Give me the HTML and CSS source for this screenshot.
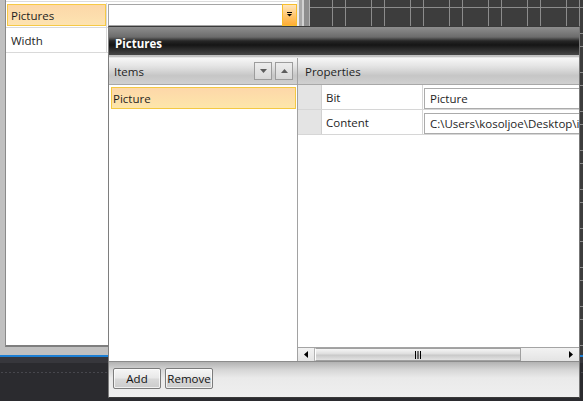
FILE: index.html
```html
<!DOCTYPE html>
<html>
<head>
<meta charset="utf-8">
<title>Designer</title>
<link rel="stylesheet" href="styles.css">
</head>
<body>
<div class="ide">
  <div class="workspace">
    <div class="prop-pane">
      <div class="prop-grid">
        <div class="pg-row">
          <div class="pg-name"><span class="pg-label is-selected">Pictures</span></div>
          <div class="pg-value">
            <div class="combo">
              <div class="combo-field"></div>
              <span class="combo-btn">
                <svg width="5" height="5" viewBox="0 0 5 5"><rect x="0" y="0" width="5" height="1" fill="#000"/><path d="M0 2H5L2.5 4.5Z" fill="#000"/></svg>
              </span>
            </div>
          </div>
        </div>
        <div class="pg-row">
          <div class="pg-name"><span class="pg-label">Width</span></div>
          <div class="pg-value"></div>
        </div>
      </div>
    </div>
    <div class="splitter"></div>
    <div class="designer"></div>
  </div>
  <div class="accent-line"></div>
  <div class="statusbar"><div class="status-dots"></div></div>

  <div class="dialog">
    <div class="dialog-title">Pictures</div>
    <div class="dialog-body">
      <div class="items-panel">
        <div class="panel-header">
          <span>Items</span>
          <div class="header-buttons">
            <button class="mini-btn"><svg width="7" height="4" viewBox="0 0 7 4"><path d="M0 0H7L3.5 4Z" fill="#5c5c5c"/></svg></button>
            <button class="mini-btn"><svg width="7" height="4" viewBox="0 0 7 4"><path d="M0 4H7L3.5 0Z" fill="#5c5c5c"/></svg></button>
          </div>
        </div>
        <div class="items-list">
          <div class="item is-selected">Picture</div>
        </div>
      </div>
      <div class="props-panel">
        <div class="panel-header props-header"><span>Properties</span></div>
        <div class="props-rows">
          <div class="prow">
            <div class="prow-gutter"></div>
            <div class="prow-name">Bit</div>
            <div class="prow-value"><div class="value-box">Picture</div></div>
          </div>
          <div class="prow">
            <div class="prow-gutter"></div>
            <div class="prow-name">Content</div>
            <div class="prow-value"><div class="value-box">C:\Users\kosoljoe\Desktop\images\picture.png</div></div>
          </div>
        </div>
        <div class="hscroll">
          <div class="hs-btn"><svg width="4" height="7" viewBox="0 0 4 7"><path d="M4 0V7L0 3.5Z" fill="#000"/></svg></div>
          <div class="hs-thumb"><svg width="6" height="8" viewBox="0 0 6 8"><rect x="0" y="0" width="1" height="8" fill="#000"/><rect x="2.5" y="0" width="1" height="8" fill="#000"/><rect x="5" y="0" width="1" height="8" fill="#000"/></svg></div>
          <div class="hs-track"></div>
          <div class="hs-btn hs-btn-end"><svg width="4" height="7" viewBox="0 0 4 7"><path d="M0 0V7L4 3.5Z" fill="#000"/></svg></div>
        </div>
      </div>
    </div>
    <div class="dialog-footer">
      <button class="btn">Add</button>
      <button class="btn">Remove</button>
    </div>
  </div>
</div>
</body>
</html>
```
FILE: styles.css
```css
* { box-sizing: border-box; }

html, body { margin: 0; padding: 0; }

body {
  width: 583px;
  height: 401px;
  overflow: hidden;
  background: #2b2b2f;
  font-family: "Open Sans", "Liberation Sans", sans-serif;
  font-size: 11.5px;
  color: #1e1e1e;
}

.ide {
  position: relative;
  width: 583px;
  height: 401px;
}

/* ---------- workspace: property grid, splitter, design surface ---------- */

.workspace {
  display: flex;
  height: 355px;
}

.prop-pane {
  width: 297px;
  padding: 0 0 8px 5px;
  background: #c0c0c0;
  display: flex;
}

.prop-grid {
  flex: 1;
  border-left: 1px solid #8a8a8a;
  border-bottom: 2px solid #7e7e7e;
  padding-top: 3px;
  background: linear-gradient(#fff 1px, #dcdcdc 1px, #dcdcdc 2px, #fff 2px);
}

.pg-row {
  display: flex;
  height: 25px;
  border-bottom: 1px solid #d9d9d9;
}

.pg-name {
  width: 101px;
  padding: 1px 0 1px 1px;
  border-right: 1px solid #d9d9d9;
}

.pg-label {
  display: flex;
  align-items: center;
  height: 100%;
  padding-left: 3px;
  border: 1px solid transparent;
}

.pg-label.is-selected {
  border-color: #f6c945;
  background: linear-gradient(#fcd7a8, #fde3b1);
}

.pg-value {
  flex: 1;
  padding: 1px 0 1px 1px;
}

.combo {
  display: flex;
  height: 100%;
}

.combo-field {
  flex: 1;
  background: #fff;
  border: 1px solid #a5a5a5;
  border-right: none;
}

.combo-btn {
  width: 15px;
  display: flex;
  justify-content: center;
  padding-top: 7px;
  border: 1px solid #f7bd2c;
  background: linear-gradient(#ffe5bd, #ffc56c 55%, #ffad35);
}

.splitter {
  width: 13px;
  background: linear-gradient(to right,
    #ececec 0 2px, #a9a9a9 2px 5px, #d2d2d2 5px 7px,
    #8e8e8e 7px 12px, #b4b4b4 12px 13px);
}

.designer {
  flex: 1;
  background-color: #3d3d3d;
  background-image:
    linear-gradient(to right, #8c8c8c 1px, transparent 1px),
    linear-gradient(to right, #8c8c8c 1px, transparent 1px),
    linear-gradient(#8c8c8c 1px, transparent 1px),
    linear-gradient(#8c8c8c 1px, transparent 1px);
  background-size: 39px 39px;
  background-position: 22px 0, 35px 0, 0 7px, 0 33px;
}

.accent-line {
  height: 2px;
  background: #1c7fd4;
}

.statusbar {
  height: 44px;
  padding-top: 14px;
  background: linear-gradient(#37373c 0 6px, #2b2b2f 6px);
}

.status-dots {
  height: 3px;
  background-image: radial-gradient(circle, #47474d 0.9px, transparent 1.1px);
  background-size: 4px 3px;
}

/* ---------- collection editor dialog ---------- */

.dialog {
  position: absolute;
  left: 108px;
  top: 26px;
  width: 472px;
  height: 372px;
  display: flex;
  flex-direction: column;
  border: 1px solid;
  border-color: #3a3a3a #777 #3a3a3a #7e7e7e;
  background: #ececec;
}

.dialog-title {
  height: 31px;
  display: flex;
  align-items: center;
  padding: 1px 0 0 6px;
  color: #fff;
  font-weight: 700;
  font-size: 11.5px;
  background: linear-gradient(#8e8e8e 0, #6c6c6c 10px, #262626 14px,
    #151515 18px, #252525 21px, #474747 28px, #c2c2c2 28px, #c2c2c2 30px, #e6e6e6 30px);
}

.dialog-body {
  flex: 1;
  display: flex;
  min-height: 0;
  border-bottom: 1px solid #8c8c8c;
}

.items-panel {
  width: 189px;
  display: flex;
  flex-direction: column;
  border-right: 1px solid #a2a2a2;
  background: #fff;
}

.props-panel {
  flex: 1;
  display: flex;
  flex-direction: column;
  min-width: 0;
  background: #fff;
}

.panel-header {
  height: 27px;
  flex: none;
  display: flex;
  align-items: center;
  padding-left: 5px;
  border-bottom: 1px solid #a8a8a8;
  background: linear-gradient(#f7f7f7, #e5e5e5 30%, #c6c6c6 68%, #d0d0d0);
}

.props-header {
  padding-left: 7px;
}

.header-buttons {
  margin-left: auto;
  padding-right: 4px;
  display: flex;
  gap: 3px;
}

.mini-btn {
  width: 18px;
  height: 18px;
  padding: 0;
  display: flex;
  align-items: center;
  justify-content: center;
  border: 1px solid #9c9c9c;
  background: linear-gradient(#ededed, #d7d7d7);
}

.items-list {
  flex: 1;
  padding: 2px 1px 0 2px;
}

.item {
  height: 22px;
  display: flex;
  align-items: center;
  padding-left: 1px;
  border: 1px solid #f4c842;
  background: linear-gradient(#fdd7a9, #fde6aa);
}

.props-rows {
  flex: 1;
}

.prow {
  display: flex;
  height: 25px;
  border-bottom: 1px solid #d6d6d6;
}

.prow-gutter {
  width: 24px;
  background: #e4e4e4;
  border-right: 1px solid #d0d0d0;
}

.prow-name {
  width: 101px;
  display: flex;
  align-items: center;
  padding-left: 4px;
  border-right: 1px solid #d6d6d6;
}

.prow-value {
  flex: 1;
  min-width: 0;
  padding: 3px 0 0 1px;
}

.value-box {
  height: 21px;
  display: flex;
  align-items: center;
  padding-left: 5px;
  white-space: nowrap;
  overflow: hidden;
  border: 1px solid #ababab;
  border-right: none;
}

.hscroll {
  height: 14px;
  flex: none;
  display: flex;
  border-top: 1px solid #a4a4a4;
  background: linear-gradient(#f2f2f2, #e4e4e4);
}

.hs-btn {
  width: 17px;
  display: flex;
  align-items: center;
  justify-content: center;
  border-right: 1px solid #b4b4b4;
}

.hs-btn-end {
  border-right: none;
}

.hs-thumb {
  width: 206px;
  display: flex;
  align-items: center;
  justify-content: center;
  border: 1px solid #a0a0a0;
  border-left-color: #fff;
  background: linear-gradient(#f6f6f6, #dedede 45%, #c9c9c9 55%, #e2e2e2);
}

.hs-track {
  flex: 1;
}

.dialog-footer {
  height: 35px;
  flex: none;
  display: flex;
  align-items: flex-start;
  gap: 4px;
  padding: 6px 0 0 4px;
  background: linear-gradient(#b2b2b2 0, #d6d6d6 8px, #eaeaea 16px, #efefef);
}

.btn {
  width: 48px;
  height: 21px;
  padding: 0;
  font: inherit;
  color: #111;
  border: 1px solid #7c7c7c;
  border-radius: 2px;
  background: linear-gradient(#f6f6f6, #e9e9e9 45%, #d8d8d8 55%, #cbcbcb);
  box-shadow: inset 0 0 0 1px rgba(255, 255, 255, 0.7);
}
```
